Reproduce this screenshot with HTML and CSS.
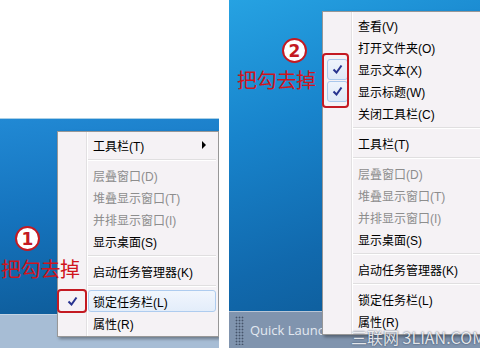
FILE: index.html
```html
<!DOCTYPE html>
<html lang="zh-CN">
<head>
  <meta charset="UTF-8">
  <meta name="viewport" content="width=device-width, initial-scale=1.0">
  <title>锁定任务栏</title>
  <link rel="stylesheet" href="styles.css">
</head>
<body>
<div class="shot shot-1">
  <div class="blank"></div>
  <div class="desk"></div>
  <div class="taskbar"></div>

  <div class="menu menu-1">
    <div class="item"><span class="ico"></span><span class="txt">工具栏(T)<i class="arrow"></i></span></div>
    <div class="sep"></div>
    <div class="item off"><span class="ico"></span><span class="txt">层叠窗口(D)</span></div>
    <div class="item off"><span class="ico"></span><span class="txt">堆叠显示窗口(T)</span></div>
    <div class="item off"><span class="ico"></span><span class="txt">并排显示窗口(I)</span></div>
    <div class="item"><span class="ico"></span><span class="txt">显示桌面(S)</span></div>
    <div class="sep"></div>
    <div class="item"><span class="ico"></span><span class="txt">启动任务管理器(K)</span></div>
    <div class="sep"></div>
    <div class="item hot">
      <span class="ico">
        <svg class="tick" width="11" height="10" viewBox="0 0 11 10"><path d="M1.5 5.5 L4.5 8.5 L9.5 1.5" fill="none" stroke="#27338f" stroke-width="2"/></svg>
      </span>
      <span class="txt">锁定任务栏(L)</span>
    </div>
    <div class="item"><span class="ico"></span><span class="txt">属性(R)</span></div>
  </div>

  <div class="mark mark-1"></div>
  <div class="badge badge-1">1</div>
  <div class="note note-1">把勾去掉</div>
</div>

<div class="shot shot-2">
  <div class="desk"></div>
  <div class="taskbar">
    <span class="grip"></span>
    <span class="ql">Quick Launch</span>
  </div>

  <div class="menu menu-2">
    <div class="item"><span class="ico"></span><span class="txt">查看(V)<i class="arrow"></i></span></div>
    <div class="item"><span class="ico"></span><span class="txt">打开文件夹(O)</span></div>
    <div class="item">
      <span class="ico"><span class="cbox">
        <svg class="tick" width="11" height="10" viewBox="0 0 11 10"><path d="M1.5 5.5 L4.5 8.5 L9.5 1.5" fill="none" stroke="#27338f" stroke-width="2"/></svg>
      </span></span>
      <span class="txt">显示文本(X)</span>
    </div>
    <div class="item">
      <span class="ico"><span class="cbox">
        <svg class="tick" width="11" height="10" viewBox="0 0 11 10"><path d="M1.5 5.5 L4.5 8.5 L9.5 1.5" fill="none" stroke="#27338f" stroke-width="2"/></svg>
      </span></span>
      <span class="txt">显示标题(W)</span>
    </div>
    <div class="item"><span class="ico"></span><span class="txt">关闭工具栏(C)</span></div>
    <div class="sep"></div>
    <div class="item"><span class="ico"></span><span class="txt">工具栏(T)<i class="arrow"></i></span></div>
    <div class="sep"></div>
    <div class="item off"><span class="ico"></span><span class="txt">层叠窗口(D)</span></div>
    <div class="item off"><span class="ico"></span><span class="txt">堆叠显示窗口(T)</span></div>
    <div class="item off"><span class="ico"></span><span class="txt">并排显示窗口(I)</span></div>
    <div class="item"><span class="ico"></span><span class="txt">显示桌面(S)</span></div>
    <div class="sep"></div>
    <div class="item"><span class="ico"></span><span class="txt">启动任务管理器(K)</span></div>
    <div class="sep"></div>
    <div class="item"><span class="ico"></span><span class="txt">锁定任务栏(L)</span></div>
    <div class="item"><span class="ico"></span><span class="txt">属性(R)</span></div>
  </div>

  <div class="mark mark-2"></div>
  <div class="badge badge-2">2</div>
  <div class="note note-2">把勾去掉</div>
  <div class="wm">三联网 3LIAN.COM</div>
</div>
</body>
</html>
```

FILE: styles.css
```css
* {
  padding: 0;
  margin: 0;
  box-sizing: border-box;
}

body {
  display: flex;
  gap: 10px;
  width: 480px;
  height: 348px;
  overflow: hidden;
  background: #fff;
  font-family: "Liberation Sans", "Noto Sans CJK SC", sans-serif;
}

.shot {
  position: relative;
  display: flex;
  flex-direction: column;
  height: 348px;
  overflow: hidden;
}

.shot-1 {
  width: 219px;
}

.shot-2 {
  width: 251px;
}

.blank {
  height: 119px;
  background: #fff;
  border-bottom: 1px solid #a9cfe6;
}

.desk {
  flex: 1;
}

.shot-1 .desk {
  background: linear-gradient(172deg, #2189d4 0%, #1573bd 45%, #0d5995 100%);
}

.shot-2 .desk {
  background: linear-gradient(160deg, #26a2e2 0%, #1884cc 35%, #1169ad 70%, #0d5893 100%);
}

.taskbar {
  display: flex;
  align-items: center;
}

.shot-1 .taskbar {
  height: 34px;
  background: #a7bdd5;
  border-top: 1px solid #c3d3e3;
}

.shot-2 .taskbar {
  height: 37px;
  padding-left: 6px;
  gap: 6px;
  background: #8094ae;
  border-top: 1px solid #b9c6d6;
}

.grip {
  width: 9px;
  height: 29px;
  background-image: radial-gradient(circle, #46546a 0.8px, transparent 1.1px);
  background-size: 3px 3px;
}

.ql {
  font-family: "Open Sans", sans-serif;
  font-size: 13px;
  color: #e3e9f1;
  white-space: nowrap;
}

/* context menu */
.menu {
  position: absolute;
  padding: 2px 0 2px;
  background-color: #f5f2f5;
  background-image: linear-gradient(90deg, transparent 28px, #e2e0e2 28px, #e2e0e2 29px, #fff 29px, #fff 30px, transparent 30px);
  border: 1px solid #979797;
  box-shadow: 2px 2px 3px rgba(0, 0, 0, 0.35);
  font-size: 12px;
  color: #000;
}

.menu-1 {
  left: 57px;
  top: 131px;
  width: 162px;
}

.menu-2 {
  left: 93px;
  top: 11px;
  width: 175px;
}

.item {
  display: flex;
  height: 22px;
}

.ico {
  display: flex;
  align-items: center;
  justify-content: center;
  width: 28px;
}

.txt {
  flex: 1;
  display: flex;
  align-items: center;
  margin: 0 2px;
  padding: 0 9px 0 4px;
  border: 1px solid transparent;
  border-radius: 3px;
  white-space: nowrap;
}

.off .txt {
  color: #8d8d8d;
}

.hot .txt {
  background: linear-gradient(#f1f6fd, #e3edfa);
  border-color: #aeccef;
}

.arrow {
  margin-left: auto;
  width: 0;
  height: 0;
  border-left: 4px solid #000;
  border-top: 4px solid transparent;
  border-bottom: 4px solid transparent;
}

.cbox {
  display: flex;
  align-items: center;
  justify-content: center;
  width: 21px;
  height: 21px;
  background: linear-gradient(#eef4fc, #dfe9f7);
  border: 1px solid #a9c8ec;
  border-radius: 3px;
}

.sep {
  height: 8px;
  margin-left: 30px;
  margin-right: 2px;
  background: linear-gradient(transparent 3px, #e0dfe0 3px, #e0dfe0 4px, #fff 4px, #fff 5px, transparent 5px);
}

/* annotations */
.mark {
  position: absolute;
  border: 2px solid #c41a22;
  border-radius: 4px;
}

.mark-1 {
  left: 57px;
  top: 289px;
  width: 30px;
  height: 24px;
}

.mark-2 {
  left: 93px;
  top: 53px;
  width: 27px;
  height: 55px;
}

.badge {
  position: absolute;
  display: flex;
  align-items: center;
  justify-content: center;
  width: 25px;
  height: 25px;
  border: 2px solid #c41a22;
  border-radius: 50%;
  background: #fff;
  color: #c41a22;
  font-family: "DejaVu Sans", sans-serif;
  font-weight: bold;
  font-size: 17px;
}

.badge-1 {
  left: 15px;
  top: 226px;
}

.badge-2 {
  left: 53px;
  top: 38px;
}

.note {
  position: absolute;
  font-family: "Noto Sans CJK SC", sans-serif;
  font-size: 20px;
  line-height: 24px;
  letter-spacing: -0.3px;
  color: #d0141c;
  white-space: nowrap;
}

.note-1 {
  left: 1px;
  top: 257px;
}

.note-2 {
  left: 8px;
  top: 68px;
}

.wm {
  position: absolute;
  left: 122px;
  top: 327px;
  font-family: "Noto Sans CJK SC", sans-serif;
  font-size: 16px;
  line-height: 20px;
  color: rgba(255, 255, 255, 0.85);
  text-shadow: 0 0 2px #2a3a55;
  white-space: nowrap;
}
```
